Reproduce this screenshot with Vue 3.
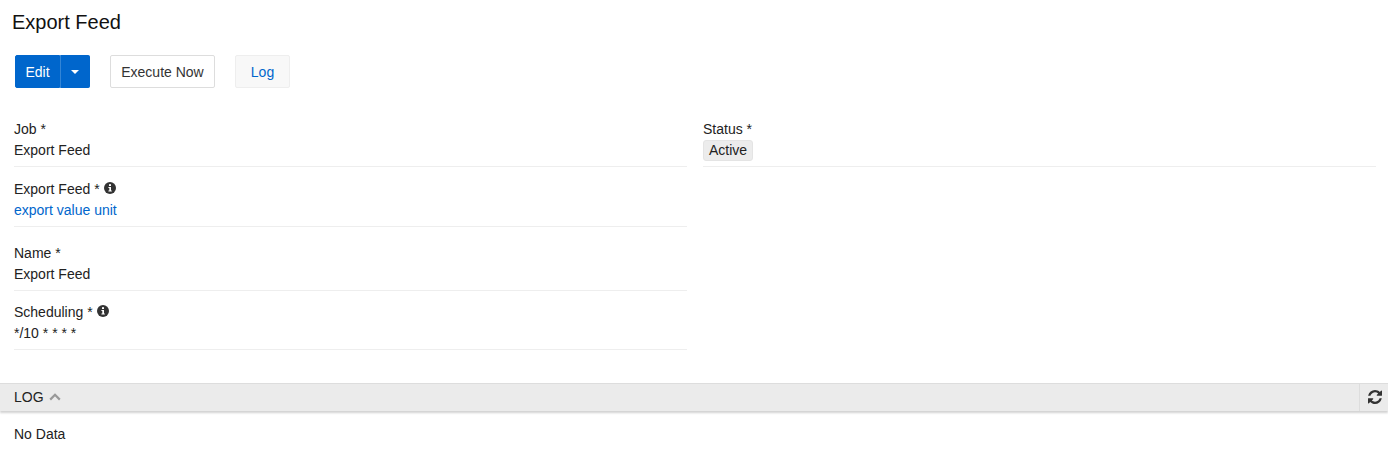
<script setup>
const leftFields = [
  { label: 'Job *', value: 'Export Feed', cls: 'f-job' },
  { label: 'Export Feed *', value: 'export value unit', info: true, link: true, cls: 'f-feed' },
  { label: 'Name *', value: 'Export Feed', cls: 'f-name' },
  { label: 'Scheduling *', value: '*/10 * * * *', info: true, cls: 'f-sched' },
]
</script>

<template>
  <div class="page">
    <h1 class="title">Export Feed</h1>

    <div class="toolbar">
      <div class="btn-group">
        <button class="btn btn-primary" type="button">Edit</button>
        <button class="btn btn-primary btn-caret" type="button" aria-label="More"><span class="caret"></span></button>
      </div>
      <button class="btn btn-default" type="button">Execute Now</button>
      <button class="btn btn-light" type="button">Log</button>
    </div>

    <div class="form">
      <div class="col">
        <div v-for="field in leftFields" :key="field.cls" class="field" :class="field.cls">
          <div class="label">
            {{ field.label }}
            <svg v-if="field.info" class="info" viewBox="0 0 12 12" aria-hidden="true">
              <circle cx="6" cy="6" r="6" fill="#333" />
              <rect x="5" y="2.2" width="2" height="1.8" fill="#fff" />
              <path d="M4.4 5h2.6v3.6h.8v1H4.4v-1h.9V6h-.9z" fill="#fff" />
            </svg>
          </div>
          <div class="value"><a v-if="field.link" href="#" class="link" @click.prevent>{{ field.value }}</a><template v-else>{{ field.value }}</template></div>
        </div>
      </div>
      <div class="col">
        <div class="field f-job f-status">
          <div class="label">Status *</div>
          <div class="value"><span class="badge">Active</span></div>
        </div>
      </div>
    </div>

    <section class="log">
      <div class="log-bar">
        <div class="log-title">
          LOG
          <svg class="chevron" viewBox="0 0 12 8" aria-hidden="true">
            <path d="M1.2 6.6 6 1.8l4.8 4.8" fill="none" stroke="#999" stroke-width="2.2" />
          </svg>
        </div>
        <button class="refresh" type="button" aria-label="Refresh">
          <svg viewBox="0 0 1536 1536" width="14" height="14" aria-hidden="true">
            <path fill="#333" d="M1511 928q0 5-1 7-64 268-268 434.500T764 1536q-146 0-282.500-55T238 1324l-129 129q-19 19-45 19t-45-19-19-45V960q0-26 19-45t45-19h448q26 0 45 19t19 45-19 45l-137 137q71 66 161 102t187 36q134 0 250-65t186-179q11-17 53-117 8-23 30-23h192q13 0 22.500 9.500T1511 928zM1536 128v448q0 26-19 45t-45 19h-448q-26 0-45-19t-19-45 19-45l138-138Q969 256 768 256q-134 0-250 65T332 500q-11 17-53 117-8 23-30 23H50q-13 0-22.500-9.500T18 608v-7q65-268 270-434.500T768 0q146 0 284 55.500T1297 212l130-129q19-19 45-19t45 19 19 45z" />
          </svg>
        </button>
      </div>
      <div class="log-body">No Data</div>
    </section>
  </div>
</template>

<style scoped>
.page {
  font-family: "Liberation Sans", Arial, sans-serif;
  font-size: 14px;
  line-height: 20px;
  color: #222;
  background: #fff;
  min-height: 474px;
}

.title {
  margin: 0;
  padding: 11px 12px 0;
  font-size: 20px;
  line-height: 23px;
  font-weight: 400;
  color: #111;
}

.toolbar {
  display: flex;
  gap: 20px;
  margin-top: 21px;
  padding-left: 15px;
}

.btn-group {
  display: flex;
}

.btn {
  height: 33px;
  font: inherit;
  border-radius: 2px;
  padding: 0 11px;
  cursor: pointer;
}

.btn-primary {
  background: #0066cc;
  border: 1px solid #0066cc;
  color: #fff;
}

.btn-group .btn-primary:first-child {
  width: 45px;
  padding: 0;
  border-radius: 2px 0 0 2px;
}

.btn-caret {
  width: 30px;
  padding: 0;
  border-radius: 0 2px 2px 0;
  border-left-color: #3385d6;
  display: flex;
  align-items: center;
  justify-content: center;
}

.caret {
  border-top: 4px solid #fff;
  border-left: 4px solid transparent;
  border-right: 4px solid transparent;
}

.btn-default {
  width: 105px;
  padding: 0;
  background: #fff;
  border: 1px solid #ddd;
  color: #333;
}

.btn-light {
  width: 55px;
  padding: 0;
  background: #f8f8f8;
  border: 1px solid #eee;
  color: #0066cc;
}

.form {
  display: grid;
  grid-template-columns: 673px 673px;
  column-gap: 16px;
  padding-left: 14px;
  margin-top: 30px;
}

.field {
  box-sizing: border-box;
  border-bottom: 1px solid #eee;
  display: flex;
  flex-direction: column;
  gap: 1px;
}

.f-job {
  height: 49px;
  padding-top: 1px;
}

.f-feed {
  height: 60px;
  padding-top: 12px;
}

.f-name {
  height: 64px;
  padding-top: 16px;
}

.f-sched {
  height: 59px;
  padding-top: 11px;
}

.label {
  display: flex;
  align-items: center;
  gap: 4px;
  color: #222;
}

.info {
  width: 12px;
  height: 12px;
  margin-top: -2px;
}

.value {
  color: #222;
}

.link {
  color: #0066cc;
  text-decoration: none;
}

.badge {
  display: inline-block;
  padding: 0 5px;
  background: #ececec;
  border: 1px solid #e4e4e4;
  border-radius: 3px;
  line-height: 19px;
}

.log {
  margin-top: 33px;
}

.log-bar {
  display: flex;
  justify-content: space-between;
  align-items: stretch;
  height: 27px;
  background: #ebebeb;
  border-top: 1px solid #ddd;
  box-shadow: 0 2px 2px rgba(0, 0, 0, 0.18);
}

.log-title {
  display: flex;
  align-items: center;
  gap: 5px;
  padding-left: 14px;
  padding-bottom: 2px;
  color: #222;
}

.chevron {
  width: 12px;
  height: 8px;
}

.refresh {
  width: 29px;
  padding: 0 0 2px 2px;
  background: none;
  border: 0;
  border-left: 1px solid #ddd;
  display: flex;
  align-items: center;
  justify-content: center;
  cursor: pointer;
}

.log-body {
  padding: 13px 14px;
}
</style>

<style>
body {
  background: #fff;
}
</style>
